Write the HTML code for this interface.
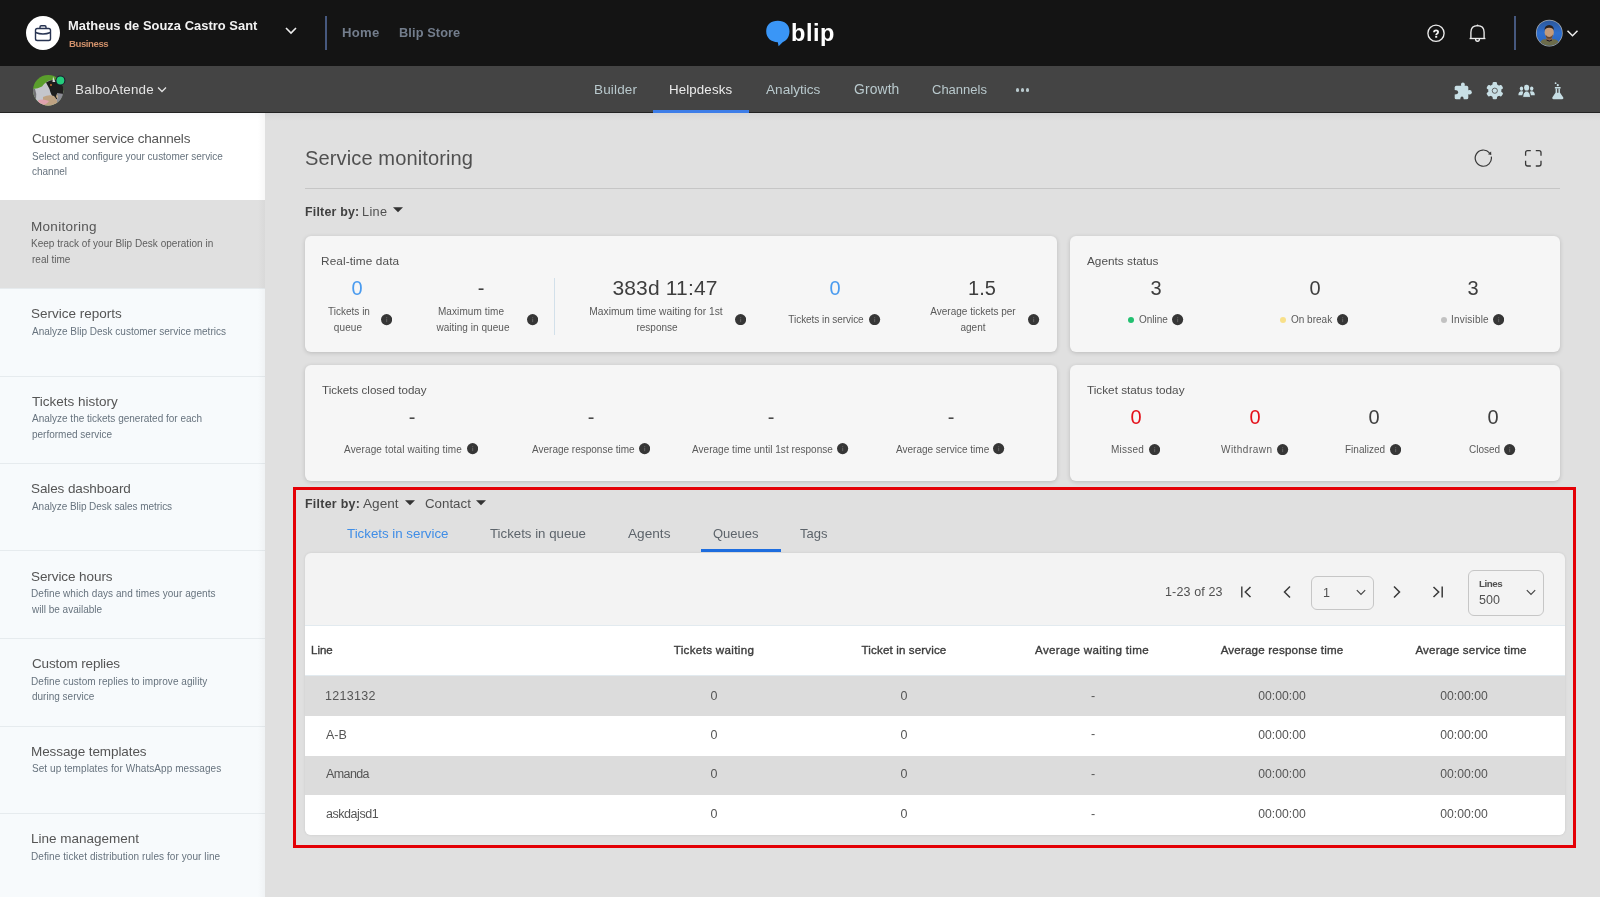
<!DOCTYPE html>
<html><head><meta charset="utf-8"><title>Service monitoring</title>
<style>
html,body{margin:0;padding:0;width:1600px;height:897px;overflow:hidden;background:#e0e0e0;font-family:"Liberation Sans", sans-serif;}
.t{position:absolute;white-space:nowrap;line-height:1;will-change:transform;}
.r{position:absolute;display:block;}
</style></head><body>
<div class="r" style="left:0px;top:0px;width:1600px;height:66px;background:#141414"></div>
<svg class="r" style="left:26px;top:16px" width="34" height="34" viewBox="0 0 34 34"><circle cx="17" cy="17" r="17" fill="#fff"/><g fill="none" stroke="#283452" stroke-width="1.4" stroke-linejoin="round"><rect x="9.5" y="12.5" width="15" height="12" rx="1.8"/><path d="M14 12.5 v-1.6 q0-1.2 1.2-1.2 h3.6 q1.2 0 1.2 1.2 v1.6"/><path d="M9.5 16.5 q7.5 3 15 0"/></g></svg>
<div class="t" style="left:68.00px;top:20.00px;font-size:12.900px;color:#f2f2f2;font-weight:700;letter-spacing:0.037px;">Matheus de Souza Castro Sant</div>
<div class="t" style="left:69.00px;top:39.01px;font-size:9.600px;color:#d0906a;font-weight:700;letter-spacing:-0.429px;">Business</div>
<svg class="r" style="left:284px;top:25px" width="14" height="12" viewBox="0 0 14 12"><path d="M2 3 L7 8 L12 3" fill="none" stroke="#eee" stroke-width="1.6"/></svg>
<div class="r" style="left:325px;top:16px;width:2px;height:34px;background:#46587e"></div>
<div class="t" style="left:342.00px;top:26.00px;font-size:13.100px;color:#737d8c;font-weight:700;letter-spacing:0.267px;">Home</div>
<div class="t" style="left:399.00px;top:27.00px;font-size:12.750px;color:#737d8c;font-weight:700;letter-spacing:0.111px;">Blip Store</div>
<svg class="r" style="left:765px;top:20px" width="26" height="27" viewBox="0 0 26 27"><path d="M12.8 0.7 C19.5 0.7 24.5 4.5 24.5 11.3 C24.5 17.2 21.2 20.8 17.6 22.3 L13.6 26.2 L12.8 22.3 C6 22 1.2 18 1.2 11.3 C1.2 4.5 6 0.7 12.8 0.7 Z" fill="#3a96f7"/></svg>
<div class="t" style="left:791.00px;top:22.00px;font-size:23.500px;color:#ffffff;font-weight:700;letter-spacing:0.567px;">blip</div>
<svg class="r" style="left:1426px;top:23px" width="20" height="20" viewBox="0 0 20 20"><circle cx="10" cy="10.25" r="8.1" fill="none" stroke="#ececec" stroke-width="1.35"/><path d="M8 9.3 Q8 7.4 10.1 7.4 Q12.1 7.4 12.1 9 Q12.1 10.1 11 10.7 Q10.2 11.2 10.2 12.1" fill="none" stroke="#f4f4f4" stroke-width="1.8"/><rect x="9.2" y="12.8" width="2" height="1.9" fill="#f4f4f4"/></svg>
<svg class="r" style="left:1467px;top:23px" width="20" height="20" viewBox="0 0 20 20"><g fill="none" stroke="#ececec" stroke-width="1.35"><path d="M3.9 15.4 V9.3 C3.9 4.8 6.8 2.6 10.5 2.6 C14.2 2.6 17.1 4.8 17.1 9.3 V15.4"/><path d="M2.6 15.5 H18.4"/><path d="M8.6 16 Q8.6 18.2 10.5 18.2 Q12.4 18.2 12.4 16"/></g><circle cx="10.5" cy="2.4" r="0.9" fill="#ececec"/></svg>
<div class="r" style="left:1514px;top:16px;width:2px;height:34px;background:#46587e"></div>
<svg class="r" style="left:1535px;top:19px" width="28" height="28" viewBox="0 0 28 28"><defs><clipPath id="ca"><circle cx="14.3" cy="14.1" r="12.7"/></clipPath><linearGradient id="gb" x1="0" y1="0" x2="0" y2="1"><stop offset="0" stop-color="#2c5594"/><stop offset="0.5" stop-color="#2f6fcf"/><stop offset="1" stop-color="#2a62b8"/></linearGradient></defs><circle cx="14.3" cy="14.1" r="13.4" fill="#a8acb0"/><g clip-path="url(#ca)"><rect width="28" height="28" fill="url(#gb)"/><path d="M3 28 Q5 20.5 10 20 L14 21.5 L18.5 20 Q24 20.5 26 28 Z" fill="#6b6b4a"/><path d="M11.5 17 L17 17 L17.5 21.5 Q14.2 23 11 21.5 Z" fill="#8a6448"/><ellipse cx="14.2" cy="13.3" rx="4.6" ry="6.1" fill="#c39a7a"/><path d="M9.5 11.5 Q9.4 6.2 14.2 6.1 Q19 6.2 18.9 11.5 Q17.8 8.6 14.2 8.8 Q10.6 8.6 9.5 11.5Z" fill="#2a201c"/><path d="M10.4 15.5 Q14.2 20.5 18 15.5 Q17.6 19.6 14.2 19.8 Q10.8 19.6 10.4 15.5Z" fill="#4a3226" opacity="0.8"/><path d="M11.5 21 Q14.5 23.2 17 21" fill="none" stroke="#101020" stroke-width="1"/></g></svg>
<svg class="r" style="left:1566px;top:29px" width="13" height="9" viewBox="0 0 13 9"><path d="M1.5 1.8 L6.5 6.8 L11.5 1.8" fill="none" stroke="#eee" stroke-width="1.5"/></svg>
<div class="r" style="left:0px;top:66px;width:1600px;height:46px;background:#444444"></div>
<div class="r" style="left:0px;top:112px;width:1600px;height:1px;background:#222"></div>
<svg class="r" style="left:33px;top:74.7px" width="33" height="32" viewBox="0 0 33 32"><defs><clipPath id="cd"><circle cx="15.2" cy="15.3" r="15.2"/></clipPath></defs><g clip-path="url(#cd)"><rect width="33" height="32" fill="#5a9e2c"/><path d="M0 14 Q5 13.5 9 11.5 Q13 6 18 5 L23 7 L31 16 L31 32 L0 32 Z" fill="#c4c6cc"/><path d="M13 7.5 Q19 3.5 26 5.5 L31 12 L31 21 Q26 25 22 24 Q18 21 16.5 14 Z" fill="#1e1e1e"/><path d="M10 22 Q16 19 21 21 Q25 25 25 32 L10 32 Z" fill="#bea282"/><path d="M24 18 L31 19 L31 32 L24 32 Z" fill="#8c8c94"/><path d="M5 25 Q11 23.5 16 26 Q13 30.5 8 30 Q5 28.5 5 25Z" fill="#e0a2ae"/><path d="M2 14 Q4 19 3 24 L0 24 L0 14 Z" fill="#3a3a3a" opacity="0.6"/><path d="M20 1.5 L22.5 7 L19.5 7 Z" fill="#d8d8d8"/><circle cx="18" cy="10" r="1" fill="#c07030"/><path d="M23.5 19 Q25.5 21 24.5 24 Q22.5 22 23.5 19Z" fill="#e0c090"/></g><circle cx="27.4" cy="5.5" r="5" fill="#1c1a2e"/><circle cx="27.4" cy="5.5" r="3.9" fill="#24cc7c"/></svg>
<div class="t" style="left:75.00px;top:82.50px;font-size:13.400px;color:#e2e2e2;font-weight:400;letter-spacing:0.200px;">BalboAtende</div>
<svg class="r" style="left:157px;top:86px" width="10" height="8" viewBox="0 0 10 8"><path d="M1 1.5 L5 5.5 L9 1.5" fill="none" stroke="#e2e2e2" stroke-width="1.3"/></svg>
<div class="t" style="left:594.00px;top:83.01px;font-size:13.500px;color:#b9c9cd;font-weight:400;letter-spacing:0.167px;">Builder</div>
<div class="t" style="left:669.00px;top:83.01px;font-size:13.300px;color:#ececec;font-weight:400;letter-spacing:0.125px;">Helpdesks</div>
<div class="t" style="left:765.50px;top:83.00px;font-size:13.600px;color:#b9c9cd;font-weight:400;">Analytics</div>
<div class="t" style="left:853.50px;top:83.01px;font-size:13.850px;color:#b9c9cd;font-weight:400;letter-spacing:0.140px;">Growth</div>
<div class="t" style="left:932.30px;top:83.00px;font-size:13.000px;color:#b9c9cd;font-weight:400;">Channels</div>
<div class="r" style="left:1015.9px;top:88.4px;width:3.2px;height:3.2px;background:#b9c9cd;border-radius:50%"></div>
<div class="r" style="left:1020.9px;top:88.4px;width:3.2px;height:3.2px;background:#b9c9cd;border-radius:50%"></div>
<div class="r" style="left:1025.9px;top:88.4px;width:3.2px;height:3.2px;background:#b9c9cd;border-radius:50%"></div>
<div class="r" style="left:653px;top:110px;width:96px;height:3px;background:#3d7de8"></div>
<svg class="r" style="left:1453px;top:82px" width="20" height="18" viewBox="0 0 20 18"><g fill="#c8dfe5"><rect x="1.7" y="3.8" width="13.6" height="13.5" rx="1.6"/><rect x="8" y="0.4" width="3.8" height="4.5" rx="1.9"/><rect x="14" y="8" width="4.8" height="4.4" rx="2.2"/></g><ellipse cx="1.5" cy="10.2" rx="3.6" ry="2.2" fill="#444"/><ellipse cx="9" cy="17.6" rx="1.7" ry="3.1" fill="#444"/></svg>
<svg class="r" style="left:1485px;top:82px" width="19" height="18" viewBox="0 0 19 18"><g fill="#c8dfe5"><circle cx="9.8" cy="8.7" r="6.6"/><rect x="7.6" y="0.1" width="4.4" height="4.5" rx="1.2" transform="rotate(0 9.8 8.7)"/><rect x="7.6" y="0.1" width="4.4" height="4.5" rx="1.2" transform="rotate(60 9.8 8.7)"/><rect x="7.6" y="0.1" width="4.4" height="4.5" rx="1.2" transform="rotate(120 9.8 8.7)"/><rect x="7.6" y="0.1" width="4.4" height="4.5" rx="1.2" transform="rotate(180 9.8 8.7)"/><rect x="7.6" y="0.1" width="4.4" height="4.5" rx="1.2" transform="rotate(240 9.8 8.7)"/><rect x="7.6" y="0.1" width="4.4" height="4.5" rx="1.2" transform="rotate(300 9.8 8.7)"/></g><circle cx="9.8" cy="8.7" r="2.6" fill="none" stroke="#555" stroke-width="0.9"/></svg>
<svg class="r" style="left:1517px;top:84px" width="20" height="15" viewBox="0 0 20 15"><g fill="#c8dfe5"><ellipse cx="4.5" cy="4.6" rx="1.7" ry="2.2"/><path d="M1.4 11.2 C1.3 8.6 2.6 7.3 4.4 7.2 L6.2 7.6 L5.6 11.2 Z"/><ellipse cx="14.7" cy="4.6" rx="1.7" ry="2.2"/><path d="M17.8 11.2 C17.9 8.6 16.6 7.3 14.8 7.2 L13 7.6 L13.6 11.2 Z"/><g stroke="#444" stroke-width="1"><ellipse cx="9.6" cy="3.7" rx="2.6" ry="3"/><path d="M5.7 13.4 C5.7 9.6 7.3 7.1 9.6 7.1 C11.9 7.1 13.5 9.6 13.5 13.4 Z"/></g><ellipse cx="9.6" cy="3.7" rx="2.5" ry="2.9"/></g></svg>
<svg class="r" style="left:1551px;top:81px" width="14" height="19" viewBox="0 0 14 19"><g fill="#c8dfe5"><circle cx="4.6" cy="2.2" r="0.9"/><circle cx="6.8" cy="4.2" r="1.1"/><rect x="3.8" y="6" width="5.9" height="1.6" rx="0.4"/><path d="M4.6 7.4 H8.9 V11.5 L12.3 16.6 Q12.8 18.3 11.2 18.3 H2.5 Q0.9 18.3 1.3 16.6 L4.6 11.5 Z"/></g><rect x="6" y="7.6" width="1.5" height="4.2" fill="#555"/></svg>
<div class="r" style="left:0px;top:113px;width:265px;height:784px;background:#f7fafc"></div>
<div class="r" style="left:0px;top:113px;width:265px;height:87px;background:#ffffff"></div>
<div class="t" style="left:32.00px;top:132.20px;font-size:13.500px;color:#555555;font-weight:400;letter-spacing:-0.183px;">Customer service channels</div>
<div class="t" style="left:32.00px;top:151.91px;font-size:10.000px;color:#67737e;font-weight:400;letter-spacing:-0.022px;">Select and configure your customer service</div>
<div class="t" style="left:32.00px;top:167.41px;font-size:10.000px;color:#67737e;font-weight:400;">channel</div>
<div class="r" style="left:0px;top:200px;width:265px;height:88px;background:#e0e0e0"></div>
<div class="t" style="left:31.00px;top:219.70px;font-size:13.500px;color:#555555;font-weight:400;letter-spacing:0.289px;">Monitoring</div>
<div class="t" style="left:31.00px;top:239.41px;font-size:10.000px;color:#5e5e5e;font-weight:400;letter-spacing:0.025px;">Keep track of your Blip Desk operation in</div>
<div class="t" style="left:32.00px;top:254.91px;font-size:10.000px;color:#5e5e5e;font-weight:400;">real time</div>
<div class="r" style="left:0px;top:288px;width:265px;height:1px;background:#e6ebee"></div>
<div class="t" style="left:31.00px;top:307.20px;font-size:13.500px;color:#555555;font-weight:400;">Service reports</div>
<div class="t" style="left:32.00px;top:326.91px;font-size:10.000px;color:#67737e;font-weight:400;">Analyze Blip Desk customer service metrics</div>
<div class="r" style="left:0px;top:376px;width:265px;height:1px;background:#e6ebee"></div>
<div class="t" style="left:32.00px;top:394.70px;font-size:13.500px;color:#555555;font-weight:400;">Tickets history</div>
<div class="t" style="left:32.00px;top:414.41px;font-size:10.000px;color:#67737e;font-weight:400;">Analyze the tickets generated for each</div>
<div class="t" style="left:32.00px;top:429.91px;font-size:10.000px;color:#67737e;font-weight:400;">performed service</div>
<div class="r" style="left:0px;top:463px;width:265px;height:1px;background:#e6ebee"></div>
<div class="t" style="left:31.00px;top:482.20px;font-size:13.500px;color:#555555;font-weight:400;letter-spacing:-0.107px;">Sales dashboard</div>
<div class="t" style="left:32.00px;top:501.91px;font-size:10.000px;color:#67737e;font-weight:400;letter-spacing:-0.053px;">Analyze Blip Desk sales metrics</div>
<div class="r" style="left:0px;top:550px;width:265px;height:1px;background:#e6ebee"></div>
<div class="t" style="left:31.00px;top:569.70px;font-size:13.500px;color:#555555;font-weight:400;letter-spacing:-0.083px;">Service hours</div>
<div class="t" style="left:31.00px;top:589.41px;font-size:10.000px;color:#67737e;font-weight:400;letter-spacing:0.058px;">Define which days and times your agents</div>
<div class="t" style="left:32.00px;top:604.91px;font-size:10.000px;color:#67737e;font-weight:400;">will be available</div>
<div class="r" style="left:0px;top:638px;width:265px;height:1px;background:#e6ebee"></div>
<div class="t" style="left:32.00px;top:657.20px;font-size:13.500px;color:#555555;font-weight:400;letter-spacing:-0.154px;">Custom replies</div>
<div class="t" style="left:31.00px;top:676.91px;font-size:10.000px;color:#67737e;font-weight:400;letter-spacing:0.059px;">Define custom replies to improve agility</div>
<div class="t" style="left:32.00px;top:692.41px;font-size:10.000px;color:#67737e;font-weight:400;">during service</div>
<div class="r" style="left:0px;top:726px;width:265px;height:1px;background:#e6ebee"></div>
<div class="t" style="left:31.00px;top:744.70px;font-size:13.500px;color:#555555;font-weight:400;letter-spacing:-0.094px;">Message templates</div>
<div class="t" style="left:32.00px;top:764.41px;font-size:10.000px;color:#67737e;font-weight:400;letter-spacing:0.065px;">Set up templates for WhatsApp messages</div>
<div class="r" style="left:0px;top:813px;width:265px;height:1px;background:#e6ebee"></div>
<div class="t" style="left:31.00px;top:832.20px;font-size:13.500px;color:#555555;font-weight:400;">Line management</div>
<div class="t" style="left:31.00px;top:851.91px;font-size:10.000px;color:#67737e;font-weight:400;letter-spacing:0.078px;">Define ticket distribution rules for your line</div>
<div class="r" style="left:258px;top:113px;width:7px;height:784px;background:linear-gradient(90deg, rgba(0,0,0,0), rgba(0,0,0,0.03))"></div>
<div class="r" style="left:265px;top:113px;width:1335px;height:784px;background:#e0e0e0"></div>
<div class="r" style="left:265px;top:113px;width:1335px;height:8px;background:linear-gradient(rgba(0,0,30,0.045), rgba(0,0,30,0))"></div>
<div class="r" style="left:0px;top:113px;width:265px;height:8px;background:linear-gradient(rgba(0,20,60,0.025), rgba(0,20,60,0))"></div>
<div class="t" style="left:304.80px;top:148.00px;font-size:20.100px;color:#505050;font-weight:400;letter-spacing:0.094px;">Service monitoring</div>
<svg class="r" style="left:1474px;top:149px" width="19" height="19" viewBox="0 0 19 19"><path d="M17.28 7.69 A8.1 8.1 0 1 1 15.5 3.9" fill="none" stroke="#383838" stroke-width="1.2"/><path d="M17.1 2.5 L13.9 5.3 L17.3 6.0 Z" fill="#383838"/></svg>
<svg class="r" style="left:1524px;top:149px" width="19" height="19" viewBox="0 0 19 19"><path d="M1.6 6.8 V3.6 Q1.6 1.6 3.6 1.6 H6.8 M11.8 1.6 H15 Q17 1.6 17 3.6 V6.8 M17 11.8 V15 Q17 17 15 17 H11.8 M6.8 17 H3.6 Q1.6 17 1.6 15 V11.8" fill="none" stroke="#383838" stroke-width="1.3"/></svg>
<div class="r" style="left:305px;top:188px;width:1255px;height:1px;background:#c6c6c6"></div>
<div class="t" style="left:304.80px;top:205.60px;font-size:12.400px;color:#404040;font-weight:700;letter-spacing:0.200px;">Filter by:</div>
<div class="t" style="left:362.00px;top:205.61px;font-size:12.700px;color:#505050;font-weight:400;letter-spacing:0.333px;">Line</div>
<svg class="r" style="left:393px;top:207.3px" width="10" height="6" viewBox="0 0 10 6"><path d="M0 0.3 H10 L5 5.3 Z" fill="#333"/></svg>
<div class="r" style="left:305px;top:236px;width:752px;height:116px;background:#f6f6f6;border-radius:6px;box-shadow:0 1px 4px rgba(0,0,0,0.17)"></div>
<div class="r" style="left:1070px;top:236px;width:490px;height:116px;background:#f6f6f6;border-radius:6px;box-shadow:0 1px 4px rgba(0,0,0,0.17)"></div>
<div class="r" style="left:305px;top:365px;width:752px;height:116px;background:#f6f6f6;border-radius:6px;box-shadow:0 1px 4px rgba(0,0,0,0.17)"></div>
<div class="r" style="left:1070px;top:365px;width:490px;height:116px;background:#f6f6f6;border-radius:6px;box-shadow:0 1px 4px rgba(0,0,0,0.17)"></div>
<div class="t" style="left:320.80px;top:256.01px;font-size:11.800px;color:#505050;font-weight:400;letter-spacing:0.108px;">Real-time data</div>
<div class="t" style="left:57.30px;width:600px;text-align:center;top:277.71px;font-size:20.000px;color:#4a9bef;font-weight:400;">0</div>
<div class="t" style="left:48.65px;width:600px;text-align:center;top:307.00px;font-size:10.000px;color:#5a5a5a;font-weight:400;">Tickets in</div>
<div class="t" style="left:48.45px;width:600px;text-align:center;top:323.00px;font-size:10.000px;color:#5a5a5a;font-weight:400;letter-spacing:0.100px;">queue</div>
<svg class="r" style="left:380.9px;top:314.4px" width="11.2" height="11.2" viewBox="0 0 12 12"><circle cx="6" cy="6" r="6" fill="#363636"/><rect x="5.35" y="5.3" width="1.3" height="3.4" fill="#5c5c5c"/><rect x="5.35" y="3.4" width="1.3" height="1.2" fill="#5c5c5c"/></svg>
<div class="t" style="left:180.50px;width:600px;text-align:center;top:277.71px;font-size:20.000px;color:#404040;font-weight:400;">-</div>
<div class="t" style="left:171.40px;width:600px;text-align:center;top:307.00px;font-size:10.000px;color:#5a5a5a;font-weight:400;letter-spacing:0.100px;">Maximum time</div>
<div class="t" style="left:172.90px;width:600px;text-align:center;top:323.00px;font-size:10.000px;color:#5a5a5a;font-weight:400;letter-spacing:0.053px;">waiting in queue</div>
<svg class="r" style="left:526.9px;top:314.4px" width="11.2" height="11.2" viewBox="0 0 12 12"><circle cx="6" cy="6" r="6" fill="#363636"/><rect x="5.35" y="5.3" width="1.3" height="3.4" fill="#5c5c5c"/><rect x="5.35" y="3.4" width="1.3" height="1.2" fill="#5c5c5c"/></svg>
<div class="r" style="left:554px;top:278px;width:1px;height:57px;background:#d2e0ea"></div>
<div class="t" style="left:365.48px;width:600px;text-align:center;top:277.32px;font-size:21.000px;color:#3e3e3e;font-weight:400;letter-spacing:0.161px;">383d 11:47</div>
<div class="t" style="left:355.80px;width:600px;text-align:center;top:306.70px;font-size:10.250px;color:#5a5a5a;font-weight:400;letter-spacing:0.026px;">Maximum time waiting for 1st</div>
<div class="t" style="left:356.60px;width:600px;text-align:center;top:323.00px;font-size:10.000px;color:#5a5a5a;font-weight:400;">response</div>
<svg class="r" style="left:735.0px;top:313.9px" width="11.2" height="11.2" viewBox="0 0 12 12"><circle cx="6" cy="6" r="6" fill="#363636"/><rect x="5.35" y="5.3" width="1.3" height="3.4" fill="#5c5c5c"/><rect x="5.35" y="3.4" width="1.3" height="1.2" fill="#5c5c5c"/></svg>
<div class="t" style="left:535.00px;width:600px;text-align:center;top:277.71px;font-size:20.000px;color:#4a9bef;font-weight:400;">0</div>
<div class="t" style="left:526.38px;width:600px;text-align:center;top:314.50px;font-size:10.000px;color:#5a5a5a;font-weight:400;letter-spacing:-0.059px;">Tickets in service</div>
<svg class="r" style="left:869.4px;top:313.9px" width="11.2" height="11.2" viewBox="0 0 12 12"><circle cx="6" cy="6" r="6" fill="#363636"/><rect x="5.35" y="5.3" width="1.3" height="3.4" fill="#5c5c5c"/><rect x="5.35" y="3.4" width="1.3" height="1.2" fill="#5c5c5c"/></svg>
<div class="t" style="left:682.00px;width:600px;text-align:center;top:277.71px;font-size:20.000px;color:#3e3e3e;font-weight:400;">1.5</div>
<div class="t" style="left:672.80px;width:600px;text-align:center;top:306.71px;font-size:10.000px;color:#5a5a5a;font-weight:400;">Average tickets per</div>
<div class="t" style="left:673.10px;width:600px;text-align:center;top:323.00px;font-size:10.000px;color:#5a5a5a;font-weight:400;">agent</div>
<svg class="r" style="left:1028.4px;top:313.9px" width="11.2" height="11.2" viewBox="0 0 12 12"><circle cx="6" cy="6" r="6" fill="#363636"/><rect x="5.35" y="5.3" width="1.3" height="3.4" fill="#5c5c5c"/><rect x="5.35" y="3.4" width="1.3" height="1.2" fill="#5c5c5c"/></svg>
<div class="t" style="left:1087.00px;top:256.31px;font-size:11.800px;color:#505050;font-weight:400;">Agents status</div>
<div class="t" style="left:856.00px;width:600px;text-align:center;top:277.80px;font-size:20.000px;color:#3e3e3e;font-weight:400;">3</div>
<div class="t" style="left:1014.80px;width:600px;text-align:center;top:277.80px;font-size:20.000px;color:#3e3e3e;font-weight:400;">0</div>
<div class="t" style="left:1172.80px;width:600px;text-align:center;top:277.80px;font-size:20.000px;color:#3e3e3e;font-weight:400;">3</div>
<div class="r" style="left:1128px;top:317px;width:6px;height:6px;background:#22c070;border-radius:50%"></div>
<div class="t" style="left:1138.60px;top:315.21px;font-size:10.000px;color:#5a5a5a;font-weight:400;">Online</div>
<svg class="r" style="left:1172.4px;top:314.4px" width="11.2" height="11.2" viewBox="0 0 12 12"><circle cx="6" cy="6" r="6" fill="#363636"/><rect x="5.35" y="5.3" width="1.3" height="3.4" fill="#5c5c5c"/><rect x="5.35" y="3.4" width="1.3" height="1.2" fill="#5c5c5c"/></svg>
<div class="r" style="left:1280px;top:317px;width:6px;height:6px;background:#f8e08a;border-radius:50%"></div>
<div class="t" style="left:1291.00px;top:315.21px;font-size:10.000px;color:#5a5a5a;font-weight:400;">On break</div>
<svg class="r" style="left:1336.9px;top:314.4px" width="11.2" height="11.2" viewBox="0 0 12 12"><circle cx="6" cy="6" r="6" fill="#363636"/><rect x="5.35" y="5.3" width="1.3" height="3.4" fill="#5c5c5c"/><rect x="5.35" y="3.4" width="1.3" height="1.2" fill="#5c5c5c"/></svg>
<div class="r" style="left:1441px;top:317px;width:6px;height:6px;background:#c2c2c2;border-radius:50%"></div>
<div class="t" style="left:1450.50px;top:315.21px;font-size:10.000px;color:#5a5a5a;font-weight:400;letter-spacing:0.188px;">Invisible</div>
<svg class="r" style="left:1493.1px;top:314.4px" width="11.2" height="11.2" viewBox="0 0 12 12"><circle cx="6" cy="6" r="6" fill="#363636"/><rect x="5.35" y="5.3" width="1.3" height="3.4" fill="#5c5c5c"/><rect x="5.35" y="3.4" width="1.3" height="1.2" fill="#5c5c5c"/></svg>
<div class="t" style="left:322.00px;top:384.01px;font-size:11.600px;color:#505050;font-weight:400;">Tickets closed today</div>
<div class="t" style="left:111.50px;width:600px;text-align:center;top:407.30px;font-size:20.000px;color:#4a4a4a;font-weight:400;">-</div>
<div class="t" style="left:291.00px;width:600px;text-align:center;top:407.30px;font-size:20.000px;color:#4a4a4a;font-weight:400;">-</div>
<div class="t" style="left:471.00px;width:600px;text-align:center;top:407.30px;font-size:20.000px;color:#4a4a4a;font-weight:400;">-</div>
<div class="t" style="left:650.50px;width:600px;text-align:center;top:407.30px;font-size:20.000px;color:#4a4a4a;font-weight:400;">-</div>
<div class="t" style="left:344.00px;top:444.50px;font-size:10.000px;color:#5a5a5a;font-weight:400;letter-spacing:0.140px;">Average total waiting time</div>
<svg class="r" style="left:466.9px;top:443.4px" width="11.2" height="11.2" viewBox="0 0 12 12"><circle cx="6" cy="6" r="6" fill="#363636"/><rect x="5.35" y="5.3" width="1.3" height="3.4" fill="#5c5c5c"/><rect x="5.35" y="3.4" width="1.3" height="1.2" fill="#5c5c5c"/></svg>
<div class="t" style="left:531.50px;top:444.50px;font-size:10.000px;color:#5a5a5a;font-weight:400;">Average response time</div>
<svg class="r" style="left:638.9px;top:443.4px" width="11.2" height="11.2" viewBox="0 0 12 12"><circle cx="6" cy="6" r="6" fill="#363636"/><rect x="5.35" y="5.3" width="1.3" height="3.4" fill="#5c5c5c"/><rect x="5.35" y="3.4" width="1.3" height="1.2" fill="#5c5c5c"/></svg>
<div class="t" style="left:691.50px;top:444.50px;font-size:10.000px;color:#5a5a5a;font-weight:400;letter-spacing:0.033px;">Average time until 1st response</div>
<svg class="r" style="left:837.4px;top:443.4px" width="11.2" height="11.2" viewBox="0 0 12 12"><circle cx="6" cy="6" r="6" fill="#363636"/><rect x="5.35" y="5.3" width="1.3" height="3.4" fill="#5c5c5c"/><rect x="5.35" y="3.4" width="1.3" height="1.2" fill="#5c5c5c"/></svg>
<div class="t" style="left:895.50px;top:444.50px;font-size:10.000px;color:#5a5a5a;font-weight:400;">Average service time</div>
<svg class="r" style="left:993.4px;top:443.4px" width="11.2" height="11.2" viewBox="0 0 12 12"><circle cx="6" cy="6" r="6" fill="#363636"/><rect x="5.35" y="5.3" width="1.3" height="3.4" fill="#5c5c5c"/><rect x="5.35" y="3.4" width="1.3" height="1.2" fill="#5c5c5c"/></svg>
<div class="t" style="left:1087.00px;top:383.60px;font-size:11.750px;color:#505050;font-weight:400;">Ticket status today</div>
<div class="t" style="left:836.30px;width:600px;text-align:center;top:407.21px;font-size:20.000px;color:#e4101a;font-weight:400;">0</div>
<div class="t" style="left:955.00px;width:600px;text-align:center;top:407.21px;font-size:20.000px;color:#e4101a;font-weight:400;">0</div>
<div class="t" style="left:1073.90px;width:600px;text-align:center;top:407.21px;font-size:20.000px;color:#3e3e3e;font-weight:400;">0</div>
<div class="t" style="left:1193.00px;width:600px;text-align:center;top:407.21px;font-size:20.000px;color:#3e3e3e;font-weight:400;">0</div>
<div class="t" style="left:1110.90px;top:445.00px;font-size:10.000px;color:#5a5a5a;font-weight:400;letter-spacing:0.220px;">Missed</div>
<svg class="r" style="left:1148.9px;top:443.6px" width="11.2" height="11.2" viewBox="0 0 12 12"><circle cx="6" cy="6" r="6" fill="#363636"/><rect x="5.35" y="5.3" width="1.3" height="3.4" fill="#5c5c5c"/><rect x="5.35" y="3.4" width="1.3" height="1.2" fill="#5c5c5c"/></svg>
<div class="t" style="left:1221.30px;top:445.00px;font-size:10.000px;color:#5a5a5a;font-weight:400;letter-spacing:0.463px;">Withdrawn</div>
<svg class="r" style="left:1277.4px;top:443.6px" width="11.2" height="11.2" viewBox="0 0 12 12"><circle cx="6" cy="6" r="6" fill="#363636"/><rect x="5.35" y="5.3" width="1.3" height="3.4" fill="#5c5c5c"/><rect x="5.35" y="3.4" width="1.3" height="1.2" fill="#5c5c5c"/></svg>
<div class="t" style="left:1344.60px;top:445.00px;font-size:10.000px;color:#5a5a5a;font-weight:400;">Finalized</div>
<svg class="r" style="left:1390.2px;top:443.6px" width="11.2" height="11.2" viewBox="0 0 12 12"><circle cx="6" cy="6" r="6" fill="#363636"/><rect x="5.35" y="5.3" width="1.3" height="3.4" fill="#5c5c5c"/><rect x="5.35" y="3.4" width="1.3" height="1.2" fill="#5c5c5c"/></svg>
<div class="t" style="left:1469.00px;top:445.00px;font-size:10.000px;color:#5a5a5a;font-weight:400;">Closed</div>
<svg class="r" style="left:1504.4px;top:443.6px" width="11.2" height="11.2" viewBox="0 0 12 12"><circle cx="6" cy="6" r="6" fill="#363636"/><rect x="5.35" y="5.3" width="1.3" height="3.4" fill="#5c5c5c"/><rect x="5.35" y="3.4" width="1.3" height="1.2" fill="#5c5c5c"/></svg>
<div class="t" style="left:304.80px;top:497.91px;font-size:12.400px;color:#404040;font-weight:700;letter-spacing:0.278px;">Filter by:</div>
<div class="t" style="left:363.10px;top:496.91px;font-size:13.600px;color:#505050;font-weight:400;">Agent</div>
<svg class="r" style="left:404.5px;top:500.3px" width="10" height="6" viewBox="0 0 10 6"><path d="M0 0.3 H10 L5 5.3 Z" fill="#333"/></svg>
<div class="t" style="left:424.75px;top:496.91px;font-size:13.300px;color:#505050;font-weight:400;">Contact</div>
<svg class="r" style="left:476.3px;top:500.3px" width="10" height="6" viewBox="0 0 10 6"><path d="M0 0.3 H10 L5 5.3 Z" fill="#333"/></svg>
<div class="t" style="left:347.25px;top:527.10px;font-size:13.300px;color:#3f8de6;font-weight:400;">Tickets in service</div>
<div class="t" style="left:490.00px;top:527.10px;font-size:13.250px;color:#5d646b;font-weight:400;">Tickets in queue</div>
<div class="t" style="left:628.00px;top:527.10px;font-size:13.650px;color:#5d646b;font-weight:400;">Agents</div>
<div class="t" style="left:712.50px;top:527.10px;font-size:13.000px;color:#5d646b;font-weight:400;">Queues</div>
<div class="t" style="left:800.00px;top:527.10px;font-size:13.000px;color:#5d646b;font-weight:400;">Tags</div>
<div class="r" style="left:701px;top:549px;width:80px;height:3px;background:#1e6ee0"></div>
<div class="r" style="left:305px;top:553px;width:1260px;height:282px;background:#f3f3f3;border-radius:6px;box-shadow:0 0 3px rgba(0,0,0,0.10);overflow:hidden"></div>
<div class="r" style="left:305px;top:625px;width:1260px;height:1px;background:#e2eaef"></div>
<div class="r" style="left:305px;top:626px;width:1260px;height:49px;background:#ffffff"></div>
<div class="r" style="left:305px;top:675px;width:1260px;height:1px;background:#e2eaef"></div>
<div class="r" style="left:305px;top:676px;width:1260px;height:40px;background:#dcdcdc"></div>
<div class="r" style="left:305px;top:716px;width:1260px;height:40px;background:#ffffff"></div>
<div class="r" style="left:305px;top:756px;width:1260px;height:39px;background:#dcdcdc"></div>
<div class="r" style="left:305px;top:795px;width:1260px;height:40px;background:#ffffff;border-radius:0 0 6px 6px"></div>
<div class="t" style="left:1164.50px;top:586.01px;font-size:12.500px;color:#505050;font-weight:400;letter-spacing:0.139px;">1-23 of 23</div>
<svg class="r" style="left:1238px;top:584px" width="16" height="16" viewBox="0 0 16 16"><path d="M3.8 2.5 V13.5" stroke="#3a3a3a" stroke-width="1.4"/><path d="M12.5 3 L7.3 8 L12.5 13" fill="none" stroke="#3a3a3a" stroke-width="1.5"/></svg>
<svg class="r" style="left:1280px;top:584px" width="14" height="16" viewBox="0 0 14 16"><path d="M10 2.5 L4.5 8 L10 13.5" fill="none" stroke="#3a3a3a" stroke-width="1.5"/></svg>
<div class="r" style="left:1311px;top:575.5px;width:63px;height:34px;border:1px solid #c6c6c6;border-radius:6px;box-sizing:border-box;background:#f3f3f3"></div>
<div class="t" style="left:1322.90px;top:587.01px;font-size:12.500px;color:#505050;font-weight:400;">1</div>
<svg class="r" style="left:1355px;top:588px" width="12" height="10" viewBox="0 0 12 10"><path d="M1.8 2.2 L6 6.4 L10.2 2.2" fill="none" stroke="#444" stroke-width="1.15"/></svg>
<svg class="r" style="left:1390px;top:584px" width="14" height="16" viewBox="0 0 14 16"><path d="M4 2.5 L9.5 8 L4 13.5" fill="none" stroke="#3a3a3a" stroke-width="1.5"/></svg>
<svg class="r" style="left:1430px;top:584px" width="16" height="16" viewBox="0 0 16 16"><path d="M3.5 3 L8.7 8 L3.5 13" fill="none" stroke="#3a3a3a" stroke-width="1.5"/><path d="M12.2 2.5 V13.5" stroke="#3a3a3a" stroke-width="1.5"/></svg>
<div class="r" style="left:1468px;top:570px;width:76px;height:46px;border:1px solid #c6c6c6;border-radius:6px;box-sizing:border-box;background:#f3f3f3"></div>
<div class="t" style="left:1479.20px;top:578.91px;font-size:9.800px;color:#505050;font-weight:700;letter-spacing:-0.500px;">Lines</div>
<div class="t" style="left:1479.20px;top:593.72px;font-size:12.500px;color:#505050;font-weight:400;">500</div>
<svg class="r" style="left:1525.3px;top:588px" width="12" height="10" viewBox="0 0 12 10"><path d="M1.8 2.2 L6 6.4 L10.2 2.2" fill="none" stroke="#444" stroke-width="1.15"/></svg>
<div class="t" style="left:311.30px;top:645.00px;font-size:11.500px;color:#3c3c3c;font-weight:400;-webkit-text-stroke:0.35px #3c3c3c;">Line</div>
<div class="t" style="left:414.30px;width:600px;text-align:center;top:643.60px;font-size:11.600px;color:#3c3c3c;font-weight:400;letter-spacing:0.329px;-webkit-text-stroke:0.35px #3c3c3c;">Tickets waiting</div>
<div class="t" style="left:603.50px;width:600px;text-align:center;top:643.60px;font-size:11.600px;color:#3c3c3c;font-weight:400;letter-spacing:0.125px;-webkit-text-stroke:0.35px #3c3c3c;">Ticket in service</div>
<div class="t" style="left:792.10px;width:600px;text-align:center;top:643.60px;font-size:11.600px;color:#3c3c3c;font-weight:400;letter-spacing:0.326px;-webkit-text-stroke:0.35px #3c3c3c;">Average waiting time</div>
<div class="t" style="left:981.75px;width:600px;text-align:center;top:643.60px;font-size:11.600px;color:#3c3c3c;font-weight:400;letter-spacing:0.175px;-webkit-text-stroke:0.35px #3c3c3c;">Average response time</div>
<div class="t" style="left:1171.00px;width:600px;text-align:center;top:643.60px;font-size:11.600px;color:#3c3c3c;font-weight:400;letter-spacing:0.158px;-webkit-text-stroke:0.35px #3c3c3c;">Average service time</div>
<div class="t" style="left:325.20px;top:690.01px;font-size:12.500px;color:#555555;font-weight:400;letter-spacing:0.300px;">1213132</div>
<div class="t" style="left:414.30px;width:600px;text-align:center;top:690.01px;font-size:12.500px;color:#555555;font-weight:400;">0</div>
<div class="t" style="left:603.50px;width:600px;text-align:center;top:690.01px;font-size:12.500px;color:#555555;font-weight:400;">0</div>
<div class="t" style="left:792.50px;width:600px;text-align:center;top:689.51px;font-size:12.500px;color:#555555;font-weight:400;">-</div>
<div class="t" style="left:981.80px;width:600px;text-align:center;top:690.00px;font-size:12.200px;color:#555555;font-weight:400;">00:00:00</div>
<div class="t" style="left:1164.40px;width:600px;text-align:center;top:690.00px;font-size:12.200px;color:#555555;font-weight:400;">00:00:00</div>
<div class="t" style="left:326.40px;top:728.81px;font-size:12.500px;color:#555555;font-weight:400;">A-B</div>
<div class="t" style="left:414.30px;width:600px;text-align:center;top:728.81px;font-size:12.500px;color:#555555;font-weight:400;">0</div>
<div class="t" style="left:603.50px;width:600px;text-align:center;top:728.81px;font-size:12.500px;color:#555555;font-weight:400;">0</div>
<div class="t" style="left:792.50px;width:600px;text-align:center;top:728.31px;font-size:12.500px;color:#555555;font-weight:400;">-</div>
<div class="t" style="left:981.80px;width:600px;text-align:center;top:728.81px;font-size:12.200px;color:#555555;font-weight:400;">00:00:00</div>
<div class="t" style="left:1164.40px;width:600px;text-align:center;top:728.81px;font-size:12.200px;color:#555555;font-weight:400;">00:00:00</div>
<div class="t" style="left:326.40px;top:768.31px;font-size:12.500px;color:#555555;font-weight:400;letter-spacing:-0.600px;">Amanda</div>
<div class="t" style="left:414.30px;width:600px;text-align:center;top:768.31px;font-size:12.500px;color:#555555;font-weight:400;">0</div>
<div class="t" style="left:603.50px;width:600px;text-align:center;top:768.31px;font-size:12.500px;color:#555555;font-weight:400;">0</div>
<div class="t" style="left:792.50px;width:600px;text-align:center;top:767.81px;font-size:12.500px;color:#555555;font-weight:400;">-</div>
<div class="t" style="left:981.80px;width:600px;text-align:center;top:768.31px;font-size:12.200px;color:#555555;font-weight:400;">00:00:00</div>
<div class="t" style="left:1164.40px;width:600px;text-align:center;top:768.31px;font-size:12.200px;color:#555555;font-weight:400;">00:00:00</div>
<div class="t" style="left:326.40px;top:808.40px;font-size:12.500px;color:#555555;font-weight:400;letter-spacing:-0.456px;">askdajsd1</div>
<div class="t" style="left:414.30px;width:600px;text-align:center;top:808.40px;font-size:12.500px;color:#555555;font-weight:400;">0</div>
<div class="t" style="left:603.50px;width:600px;text-align:center;top:808.40px;font-size:12.500px;color:#555555;font-weight:400;">0</div>
<div class="t" style="left:792.50px;width:600px;text-align:center;top:807.90px;font-size:12.500px;color:#555555;font-weight:400;">-</div>
<div class="t" style="left:981.80px;width:600px;text-align:center;top:808.41px;font-size:12.200px;color:#555555;font-weight:400;">00:00:00</div>
<div class="t" style="left:1164.40px;width:600px;text-align:center;top:808.41px;font-size:12.200px;color:#555555;font-weight:400;">00:00:00</div>
<div class="r" style="left:292.5px;top:487px;width:1283.7px;height:361px;border:3px solid #e40006;box-sizing:border-box"></div>
</body></html>
